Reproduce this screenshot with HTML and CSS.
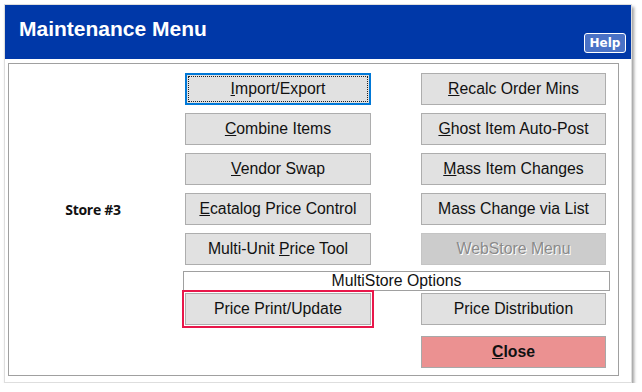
FILE: index.html
```html
<!DOCTYPE html>
<html>
<head>
<meta charset="utf-8">
<link rel="stylesheet" href="styles.css">
</head>
<body>
<div class="window">
  <div class="titlebar">
    <div class="title">Maintenance Menu</div>
    <div class="help">Help</div>
  </div>
  <div class="panel">
    <div class="row">
      <div class="label"></div>
      <div class="btn focused"><span><u>I</u>mport/Export</span></div>
      <div class="spacer"></div>
      <div class="btn"><span><u>R</u>ecalc Order Mins</span></div>
    </div>
    <div class="row">
      <div class="label"></div>
      <div class="btn"><span><u>C</u>ombine Items</span></div>
      <div class="spacer"></div>
      <div class="btn"><span><u>G</u>host Item Auto-Post</span></div>
    </div>
    <div class="row">
      <div class="label"></div>
      <div class="btn"><span><u>V</u>endor Swap</span></div>
      <div class="spacer"></div>
      <div class="btn"><span><u>M</u>ass Item Changes</span></div>
    </div>
    <div class="row">
      <div class="label">Store #3</div>
      <div class="btn"><span><u>E</u>catalog Price Control</span></div>
      <div class="spacer"></div>
      <div class="btn"><span>Mass Change via List</span></div>
    </div>
    <div class="row">
      <div class="label"></div>
      <div class="btn"><span>Multi-Unit <u>P</u>rice Tool</span></div>
      <div class="spacer"></div>
      <div class="btn disabled"><span>WebStore Menu</span></div>
    </div>
    <div class="multistore">MultiStore Options</div>
    <div class="row row-price">
      <div class="label"></div>
      <div class="btn highlighted"><span>Price Print/Update</span></div>
      <div class="spacer"></div>
      <div class="btn"><span>Price Distribution</span></div>
    </div>
    <div class="row row-close">
      <div class="label"></div>
      <div class="blank"></div>
      <div class="spacer"></div>
      <div class="btn close"><span><u>C</u>lose</span></div>
    </div>
  </div>
</div>
</body>
</html>
```
FILE: styles.css
```css
html, body {
  margin: 0;
  padding: 0;
  background: #ffffff;
}

.window {
  margin: 4px 0 0 4px;
  width: 626px;
  height: 377px;
  border: 1px solid #dedede;
  background: #ffffff;
  box-shadow: 2px 3px 3px rgba(0, 0, 0, 0.38);
}

.titlebar {
  height: 54px;
  background: #0038a8;
  display: flex;
  justify-content: space-between;
}

.title {
  font-family: "Liberation Sans", Arial, sans-serif;
  font-weight: bold;
  font-size: 21px;
  color: #ffffff;
  padding: 12px 0 0 14px;
  line-height: 24px;
}

.help {
  align-self: flex-end;
  margin: 0 5px 6px 0;
  width: 40px;
  height: 18px;
  border: 1px solid #ffffff;
  border-radius: 3px;
  background: #4a72c6;
  color: #ffffff;
  font-family: "DejaVu Sans", Verdana, sans-serif;
  font-weight: bold;
  font-size: 12px;
  line-height: 18px;
  text-align: center;
}

.panel {
  margin: 4px 12px 0 3px;
  height: 313px;
  box-sizing: border-box;
  border: 1px solid #a0a0a0;
  padding-top: 9px;
  display: flex;
  flex-direction: column;
}

.row {
  display: flex;
  height: 32px;
  margin-bottom: 8px;
}

.label {
  width: 168px;
  margin-right: 8px;
  font-family: "Open Sans", "Segoe UI", sans-serif;
  font-weight: bold;
  font-size: 14px;
  letter-spacing: -0.3px;
  color: #111111;
  display: flex;
  align-items: center;
  justify-content: center;
}

.spacer {
  width: 50px;
}

.blank {
  width: 186px;
}

.btn {
  position: relative;
  width: 186px;
  height: 32px;
  box-sizing: border-box;
  border: 1px solid #adadad;
  background: #e1e1e1;
  font-family: "Liberation Sans", Arial, sans-serif;
  font-size: 15.8px;
  color: #111111;
  display: flex;
  align-items: center;
  justify-content: center;
}

.row .btn:last-child {
  width: 185px;
}

.btn.focused {
  border: 2px solid #0078d7;
}

.btn.focused::after {
  content: "";
  position: absolute;
  left: 1px;
  top: 1px;
  right: 1px;
  bottom: 1px;
  border: 1px dotted #222222;
}

.btn.disabled {
  background: #cccccc;
  border-color: #c4c4c4;
  color: #8a8a8a;
  text-shadow: 1px 1px 0 #ffffff;
}

.btn.highlighted {
  outline: 2px solid #e8174a;
  outline-offset: 1px;
}

.btn.close {
  background: #eb9191;
  border-color: #a8a8a8;
  font-weight: bold;
}

.multistore {
  margin: -2px 0 0 174px;
  width: 427px;
  height: 21px;
  box-sizing: border-box;
  border: 1px solid #a0a0a0;
  background: #ffffff;
  font-family: "Liberation Sans", Arial, sans-serif;
  font-size: 15.8px;
  color: #111111;
  text-align: center;
  line-height: 18px;
}

.row-price {
  margin-top: 2px;
  margin-bottom: 11px;
}
```
